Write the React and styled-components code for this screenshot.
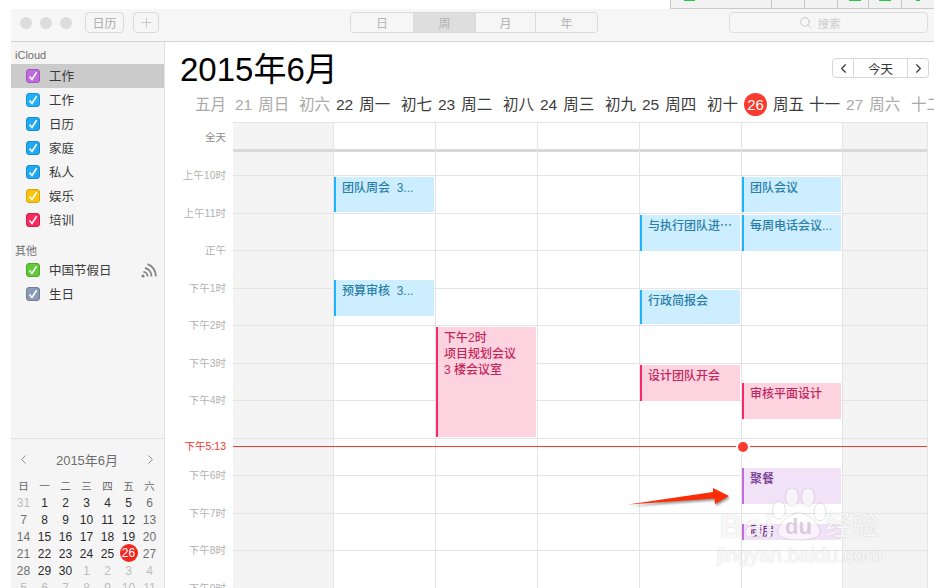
import React from "react";
import styled, { createGlobalStyle } from "styled-components";
import { ChevronLeft, ChevronRight, Plus, Search } from "lucide-react";

const FONT = `"Liberation Sans", "Noto Sans CJK SC", sans-serif`;

const GlobalStyle = createGlobalStyle`
  html, body {
    margin: 0;
    padding: 0;
    background: #fff;
  }
  * {
    box-sizing: border-box;
  }
  body {
    font-family: ${FONT};
  }
`;

const calendars = [
  { name: "工作", color: "#bf6bdc", edge: "#a352c0", selected: true },
  { name: "工作", color: "#1fb0f8", edge: "#1a93d0" },
  { name: "日历", color: "#1fa8f4", edge: "#1a8cc8" },
  { name: "家庭", color: "#1fa8f4", edge: "#1a8cc8" },
  { name: "私人", color: "#1fa8f4", edge: "#1a8cc8" },
  { name: "娱乐", color: "#fbc40a", edge: "#d8a608" },
  { name: "培训", color: "#f8295f", edge: "#cf1f4e" },
];

const otherCalendars = [
  { name: "中国节假日", color: "#5fca36", edge: "#4ea82b", shared: true },
  { name: "生日", color: "#8b9ab6", edge: "#6f7d96" },
];

const hours = ["上午10时", "上午11时", "正午", "下午1时", "下午2时", "下午3时", "下午4时", "", "下午6时", "下午7时", "下午8时", "下午9时"];

const headerDays = [
  { lunar: "五月", date: "21", week: "周日", muted: true, wide: true },
  { lunar: "初六", date: "22", week: "周一", lunarMuted: true },
  { lunar: "初七", date: "23", week: "周二" },
  { lunar: "初八", date: "24", week: "周三" },
  { lunar: "初九", date: "25", week: "周四" },
  { lunar: "初十", date: "26", week: "周五", today: true },
  { lunar: "十一", date: "27", week: "周六", muted: true, lunarDark: true },
  { lunar: "十二", date: "28", week: "周日", muted: true },
];

const days = [
  { width: 101, weekend: true, events: [] },
  {
    width: 102,
    events: [
      { kind: "blue", top: 177, height: 35, lines: ["团队周会  3..."] },
      { kind: "blue", top: 280, height: 36, lines: ["预算审核  3..."] },
    ],
  },
  {
    width: 102,
    events: [{ kind: "pink", top: 327, height: 110, lines: ["下午2时", "项目规划会议", "3 楼会议室"] }],
  },
  { width: 102, events: [] },
  {
    width: 102,
    events: [
      { kind: "blue", top: 215, height: 36, lines: ["与执行团队进⋯"] },
      { kind: "blue", top: 290, height: 34, lines: ["行政简报会"] },
      { kind: "pink", top: 365, height: 36, lines: ["设计团队开会"] },
    ],
  },
  {
    width: 101,
    events: [
      { kind: "blue", top: 177, height: 35, lines: ["团队会议"] },
      { kind: "blue", top: 215, height: 36, lines: ["每周电话会议..."] },
      { kind: "pink", top: 383, height: 36, lines: ["审核平面设计"] },
      { kind: "purple", top: 468, height: 36, lines: ["聚餐"] },
      { kind: "purple", top: 524, height: 16, lines: ["厨房"], pad: 0 },
    ],
  },
  { width: 85, weekend: true, events: [] },
];

const eventColors = {
  blue: { bg: "#cdeeff", bar: "#1cb5fb", text: "#2a7fa8" },
  pink: { bg: "#fdd3e0", bar: "#f7296a", text: "#c2265c" },
  purple: { bg: "#f2e2f8", bar: "#c06cdd", text: "#70348c" },
};

const GRID_TOP = 122;

const miniWeeks = [
  ["31", "1", "2", "3", "4", "5", "6"],
  ["7", "8", "9", "10", "11", "12", "13"],
  ["14", "15", "16", "17", "18", "19", "20"],
  ["21", "22", "23", "24", "25", "26", "27"],
  ["28", "29", "30", "1", "2", "3", "4"],
  ["5", "6", "7", "8", "9", "10", "11"],
];

const stripCells = [
  { width: 101, pad: 13, mark: 11 },
  { width: 33 },
  { width: 33 },
  { width: 31, pad: 11, mark: 12 },
  { width: 33, pad: 10, mark: 12 },
  { width: 33, pad: 14, mark: 4 },
];

const BroadcastIcon = () => (
  <svg width="17" height="15" viewBox="0 0 17 15" fill="none" stroke="#828282" strokeWidth="1.8">
    <circle cx="2" cy="13" r="1.6" fill="#828282" stroke="none" />
    <path d="M2.4 8.8a4.6 4.6 0 0 1 4.2 4.6" />
    <path d="M4 5a8.4 8.4 0 0 1 6.5 8.4" />
    <path d="M6.6 1.2a12 12 0 0 1 8.2 12.2" />
  </svg>
);

const CheckMark = () => (
  <svg width="10" height="10" viewBox="0 0 10 10" fill="none" stroke="#fff" strokeWidth="1.6">
    <path d="M1.5 5.4 4 8.4 8.6 1.2" />
  </svg>
);

const CalendarRow = ({ item }) => (
  <Row $selected={item.selected}>
    <Check $color={item.color} $edge={item.edge}>
      <CheckMark />
    </Check>
    <RowName>{item.name}</RowName>
    {item.shared && (
      <SharedIcon>
        <BroadcastIcon />
      </SharedIcon>
    )}
  </Row>
);

const App = () => {
  return (
    <Page>
      <GlobalStyle />
      <TopStrip>
        {stripCells.map((cell, i) => (
          <StripCell key={i} $width={cell.width} $pad={cell.pad || 0}>
            {cell.mark && <StripMark $width={cell.mark} />}
          </StripCell>
        ))}
      </TopStrip>

      <Win>
        <Toolbar>
          <Lights>
            <Light />
            <Light />
            <Light />
          </Lights>
          <ToolButton $width={39} $ml={13}>日历</ToolButton>
          <ToolButton $width={26} $ml={9}>
            <Plus size={15} strokeWidth={1} />
          </ToolButton>
          <Segments>
            <Segment $width={63}>日</Segment>
            <Segment $width={62} $active>周</Segment>
            <Segment $width={60}>月</Segment>
            <Segment $width={61} $last>年</Segment>
          </Segments>
          <SearchBox>
            <Search size={13} strokeWidth={1.3} />
            <span>搜索</span>
          </SearchBox>
        </Toolbar>

        <Body>
          <Sidebar>
            <GroupLabel $top={6}>iCloud</GroupLabel>
            {calendars.map((c, i) => (
              <CalendarRow key={i} item={c} />
            ))}
            <GroupLabel $top={12}>其他</GroupLabel>
            {otherCalendars.map((c, i) => (
              <CalendarRow key={i} item={c} />
            ))}

            <MiniCal>
              <MiniHeader>
                <ChevronLeft size={15} strokeWidth={1.4} />
                <span>2015年6月</span>
                <ChevronRight size={15} strokeWidth={1.4} />
              </MiniHeader>
              <MiniGrid>
                {["日", "一", "二", "三", "四", "五", "六"].map((d) => (
                  <MiniWeekday key={d}>{d}</MiniWeekday>
                ))}
                {miniWeeks.map((week, w) =>
                  week.map((d, i) => {
                    const outside = (w === 0 && i === 0) || (w === 4 && i > 2) || w === 5;
                    const weekend = i === 0 || i === 6;
                    return (
                      <MiniDay key={`${w}-${i}`} $outside={outside} $weekend={weekend}>
                        {d === "26" ? <MiniToday>26</MiniToday> : d}
                      </MiniDay>
                    );
                  })
                )}
              </MiniGrid>
            </MiniCal>
          </Sidebar>

          <Main>
            <TitleRow>
              <Title>2015年6月</Title>
              <NavGroup>
                <NavButton $width={22} $pos="left">
                  <ChevronLeft size={15} strokeWidth={1.8} />
                </NavButton>
                <NavButton $width={54} $pos="mid">今天</NavButton>
                <NavButton $width={21} $pos="right">
                  <ChevronRight size={15} strokeWidth={1.8} />
                </NavButton>
              </NavGroup>
            </TitleRow>

            <DayHeader>
              {headerDays.map((d) => (
                <HeaderCell key={d.date} $wide={d.wide}>
                  <Lunar $wide={d.wide} $muted={(d.muted && !d.lunarDark) || d.lunarMuted}>{d.lunar}</Lunar>
                  <DayLabel $muted={d.muted}>
                    {d.today ? <TodayBadge>{d.date}</TodayBadge> : <span>{d.date}</span>}
                    <span>{d.week}</span>
                  </DayLabel>
                </HeaderCell>
              ))}
            </DayHeader>

            <Schedule>
              <Gutter>
                <AllDayLabel>全天</AllDayLabel>
                {hours.map((h, i) => (
                  <HourLabel key={i}>{h}</HourLabel>
                ))}
                <NowLabel>下午5:13</NowLabel>
              </Gutter>

              <Grid>
                {days.map((day, i) => (
                  <DayColumn key={i} $width={day.width} $weekend={day.weekend}>
                    <AllDayCell />
                    <LeadCell />
                    {hours.map((_, h) => (
                      <HourCell key={h} />
                    ))}
                    {day.events.map((ev, e) => (
                      <Event key={e} $kind={ev.kind} $top={ev.top - GRID_TOP} $height={ev.height} $pad={ev.pad ?? 3}>
                        {ev.lines.map((line) => (
                          <div key={line}>{line}</div>
                        ))}
                      </Event>
                    ))}
                  </DayColumn>
                ))}
                <NowLine />
                <NowDot />
              </Grid>
            </Schedule>
          </Main>
        </Body>
      </Win>

      <Arrow width="104" height="24" viewBox="0 0 104 24">
        <path d="M1 20.5 86 8 86 4 102 12 88 20 87.5 14.5 Z" fill="#fb2c06" />
      </Arrow>

      <Watermark>
        <Paw width="56" height="62" viewBox="0 0 56 62">
          <g fill="rgba(255,255,255,0.6)" stroke="rgba(110,110,110,0.2)" strokeWidth="1">
            <ellipse cx="21" cy="11" rx="6.5" ry="9" />
            <ellipse cx="37" cy="11" rx="6.5" ry="9" />
            <ellipse cx="8" cy="24" rx="6.5" ry="9" />
            <ellipse cx="49" cy="26" rx="6" ry="9" />
            <path d="M28 27c9 0 20 10 21 17 1 7-7 10-21 10S6 51 7 44c1-7 12-17 21-17Z" />
          </g>
        </Paw>
        <BaiText>Bai</BaiText>
        <DuText>du</DuText>
        <JingText>经验</JingText>
        <UrlText>jingyan.baidu.com</UrlText>
      </Watermark>
    </Page>
  );
};

const Page = styled.div`
  position: relative;
  width: 934px;
  height: 588px;
  overflow: hidden;
  background: #fff;
  display: flex;
  flex-direction: column;
`;

const TopStrip = styled.div`
  display: flex;
  align-self: flex-end;
  width: 264px;
  height: 9px;
  flex: none;
`;

const StripCell = styled.div`
  width: ${(p) => p.$width}px;
  padding-left: ${(p) => p.$pad}px;
  background: #f2f2f2;
  border-left: 1px solid #c8c8c8;
  border-bottom: 1px solid #c8c8c8;
`;

const StripMark = styled.div`
  width: ${(p) => p.$width}px;
  height: 1px;
  background: #25c73c;
`;

const Win = styled.div`
  flex: 1;
  min-height: 0;
  margin-left: 11px;
  display: flex;
  flex-direction: column;
`;

const Toolbar = styled.div`
  flex: none;
  height: 33px;
  display: flex;
  align-items: flex-start;
  padding: 3px 0 0 9px;
  background: #f6f6f6;
  border-bottom: 1px solid #d2d2d2;
`;

const Lights = styled.div`
  display: flex;
  gap: 8px;
  margin-top: 5px;
`;

const Light = styled.div`
  width: 12px;
  height: 12px;
  border-radius: 50%;
  background: #dcdcdc;
`;

const ToolButton = styled.div`
  width: ${(p) => p.$width}px;
  margin-left: ${(p) => p.$ml}px;
  height: 21px;
  display: flex;
  align-items: center;
  justify-content: center;
  font-size: 12px;
  color: #ababab;
  background: #f6f6f6;
  border: 1px solid #dadada;
  border-radius: 4px;
`;

const Segments = styled.div`
  margin-left: 191px;
  width: 248px;
  height: 21px;
  display: flex;
  border: 1px solid #dadada;
  border-radius: 4px;
  overflow: hidden;
`;

const Segment = styled.div`
  width: ${(p) => p.$width}px;
  display: flex;
  align-items: center;
  justify-content: center;
  font-size: 12px;
  color: #b4b4b4;
  background: ${(p) => (p.$active ? "#dedede" : "#f6f6f6")};
  border-right: ${(p) => (p.$last ? "none" : "1px solid #dadada")};
`;

const SearchBox = styled.div`
  margin-left: 131px;
  width: 199px;
  height: 21px;
  padding-right: 18px;
  display: flex;
  align-items: center;
  justify-content: center;
  gap: 6px;
  font-size: 11.5px;
  color: #cdcdcd;
  background: #f6f6f6;
  border: 1px solid #dedede;
  border-radius: 4px;

  svg {
    color: #b8b8b8;
  }
`;

const Body = styled.div`
  flex: 1;
  min-height: 0;
  display: flex;
`;

const Sidebar = styled.aside`
  flex: none;
  width: 154px;
  display: flex;
  flex-direction: column;
  background: #f5f5f5;
  border-right: 1px solid #e2e2e2;
`;

const GroupLabel = styled.div`
  flex: none;
  padding: ${(p) => p.$top}px 0 0 4px;
  height: ${(p) => p.$top + 14 + (p.$top === 6 ? 2 : 0)}px;
  font-size: 11px;
  line-height: 14px;
  color: #6f6f6f;
`;

const Row = styled.div`
  flex: none;
  height: 24px;
  display: flex;
  align-items: center;
  gap: 9px;
  padding-left: 15px;
  background: ${(p) => (p.$selected ? "#cbcbcb" : "transparent")};
`;

const Check = styled.div`
  width: 14px;
  height: 14px;
  display: flex;
  align-items: center;
  justify-content: center;
  border-radius: 3px;
  background: ${(p) => p.$color};
  border: 1px solid ${(p) => p.$edge};
`;

const RowName = styled.span`
  margin-top: -2px;
  font-size: 12.5px;
  color: #3a3a3a;
`;

const SharedIcon = styled.span`
  margin-left: auto;
  margin-right: 6px;
  display: flex;
`;

const MiniCal = styled.div`
  margin-top: auto;
  flex: none;
  height: 150px;
  overflow: hidden;
  padding-top: 11px;
  border-top: 1px solid #e0e0e0;
`;

const MiniHeader = styled.div`
  height: 18px;
  padding: 0 6px 0 5px;
  display: flex;
  align-items: center;
  justify-content: space-between;
  font-size: 13px;
  color: #6e6e6e;

  svg {
    color: #7a7a7a;
  }
`;

const MiniGrid = styled.div`
  margin: 9px 0 0 2px;
  display: grid;
  grid-template-columns: repeat(7, 21px);
  grid-auto-rows: 17px;
`;

const MiniWeekday = styled.div`
  display: flex;
  align-items: center;
  justify-content: center;
  font-size: 10.5px;
  color: #666;
`;

const MiniDay = styled.div`
  display: flex;
  align-items: center;
  justify-content: center;
  font-size: 12px;
  font-weight: ${(p) => (p.$outside || p.$weekend ? 400 : 500)};
  color: ${(p) => (p.$outside ? "#bdbdbd" : p.$weekend ? "#6f6f6f" : "#2a2a2a")};
`;

const MiniToday = styled.span`
  width: 18px;
  height: 18px;
  margin-top: -1px;
  display: flex;
  align-items: center;
  justify-content: center;
  border-radius: 50%;
  font-weight: 400;
  color: #fff;
  background: #f5261f;
`;

const Main = styled.main`
  flex: 1;
  min-width: 0;
  display: flex;
  flex-direction: column;
  background: #fff;
`;

const TitleRow = styled.div`
  flex: none;
  height: 50px;
  display: flex;
  align-items: flex-start;
  justify-content: space-between;
  padding: 0 5px 0 15px;
`;

const Title = styled.h1`
  margin: 9px 0 0;
  font-size: 33px;
  line-height: 38px;
  font-weight: 400;
  color: #000;
`;

const NavGroup = styled.div`
  display: flex;
  margin-top: 16px;
`;

const NavButton = styled.div`
  width: ${(p) => p.$width}px;
  height: 20px;
  display: flex;
  align-items: center;
  justify-content: center;
  font-size: 12.5px;
  color: #333;
  background: #fff;
  border: 1px solid #d6d6d6;
  border-left-width: ${(p) => (p.$pos === "left" ? 1 : 0)}px;
  border-radius: ${(p) => (p.$pos === "left" ? "4px 0 0 4px" : p.$pos === "right" ? "0 4px 4px 0" : "0")};
`;

const DayHeader = styled.div`
  flex: none;
  height: 30px;
  display: flex;
  align-items: flex-start;
  padding: 1px 0 0 30px;
  overflow: hidden;
  font-size: 15.5px;
  line-height: 24px;
  white-space: nowrap;
`;

const HeaderCell = styled.div`
  flex: none;
  width: ${(p) => (p.$wide ? 104 : 102)}px;
  display: flex;
`;

const Lunar = styled.span`
  flex: none;
  width: ${(p) => (p.$wide ? 40 : 37)}px;
  color: ${(p) => (p.$muted ? "#a9a9a9" : "#3c3c3c")};
`;

const DayLabel = styled.span`
  display: flex;
  gap: 6px;
  color: ${(p) => (p.$muted ? "#a9a9a9" : "#3c3c3c")};
`;

const TodayBadge = styled.span`
  width: 23px;
  height: 23px;
  display: flex;
  align-items: center;
  justify-content: center;
  border-radius: 50%;
  font-size: 15px;
  color: #fff;
  background: #fb3a2f;
`;

const Schedule = styled.div`
  flex: 1;
  min-height: 0;
  display: flex;
`;

const Gutter = styled.div`
  position: relative;
  flex: none;
  width: 68px;
  padding: 0 7px 0 0;
  text-align: right;
  font-size: 10.5px;
  color: #b2b2b2;
`;

const AllDayLabel = styled.div`
  height: 34px;
  padding-top: 8px;
  line-height: 14px;
  color: #8c8c8c;
`;

const HourLabel = styled.div`
  height: 37.5px;
  line-height: 39.5px;
`;

const NowLabel = styled.div`
  position: absolute;
  right: 7px;
  top: 317px;
  line-height: 14px;
  color: #f5352b;
`;

const Grid = styled.div`
  position: relative;
  flex: none;
  width: 695px;
  display: flex;
  overflow: hidden;
`;

const DayColumn = styled.div`
  position: relative;
  flex: none;
  width: ${(p) => p.$width}px;
  background: ${(p) => (p.$weekend ? "#f4f4f4" : "#fff")};
  border-right: 1px solid #e4e4e4;
`;

const AllDayCell = styled.div`
  height: 30px;
  border-top: 1px solid #e4e4e4;
  border-bottom: 3px solid #d8d8d8;
`;

const LeadCell = styled.div`
  height: 24px;
  border-bottom: 1px solid #e4e4e4;
`;

const HourCell = styled.div`
  height: 37.5px;
  border-bottom: 1px solid #e4e4e4;
`;

const Event = styled.div`
  position: absolute;
  left: 0;
  right: 1px;
  top: ${(p) => p.$top}px;
  height: ${(p) => p.$height}px;
  padding: ${(p) => p.$pad}px 0 0 6px;
  overflow: hidden;
  font-size: 12px;
  font-weight: 500;
  line-height: 16px;
  white-space: pre;
  color: ${(p) => eventColors[p.$kind].text};
  background: ${(p) => eventColors[p.$kind].bg};
  border-left: 2px solid ${(p) => eventColors[p.$kind].bar};
`;

const NowLine = styled.div`
  position: absolute;
  left: 0;
  width: 694px;
  top: 324px;
  height: 1px;
  background: #fb3a30;
`;

const NowDot = styled.div`
  position: absolute;
  left: 505px;
  top: 320px;
  width: 10px;
  height: 10px;
  border-radius: 50%;
  background: #fb3a30;
  box-shadow: 0 0 0 2px #fff;
`;

const Arrow = styled.svg`
  position: absolute;
  left: 627px;
  top: 484px;
  overflow: visible;
  filter: drop-shadow(1px 2px 1px rgba(0, 0, 0, 0.4));
`;

const Watermark = styled.div`
  position: absolute;
  left: 716px;
  top: 486px;
  width: 172px;
  height: 84px;
  pointer-events: none;
  color: rgba(255, 255, 255, 0.85);
  text-shadow: 0 0 1.5px rgba(70, 70, 70, 0.28);
`;

const Paw = styled.svg`
  position: absolute;
  left: 55px;
  top: 0;
`;

const BaiText = styled.div`
  position: absolute;
  left: 4px;
  top: 24px;
  font-size: 31px;
  line-height: 34px;
  font-weight: 700;
  letter-spacing: 2.5px;
`;

const DuText = styled.div`
  position: absolute;
  left: 69px;
  top: 30px;
  font-size: 22px;
  line-height: 22px;
  font-weight: 700;
  color: rgba(190, 165, 200, 0.55);
  text-shadow: none;
`;

const JingText = styled.div`
  position: absolute;
  left: 109px;
  top: 25px;
  font-size: 27px;
  line-height: 30px;
  white-space: nowrap;
`;

const UrlText = styled.div`
  position: absolute;
  left: 1px;
  top: 57px;
  font-size: 20.5px;
  line-height: 24px;
  white-space: nowrap;
`;

export default App;
